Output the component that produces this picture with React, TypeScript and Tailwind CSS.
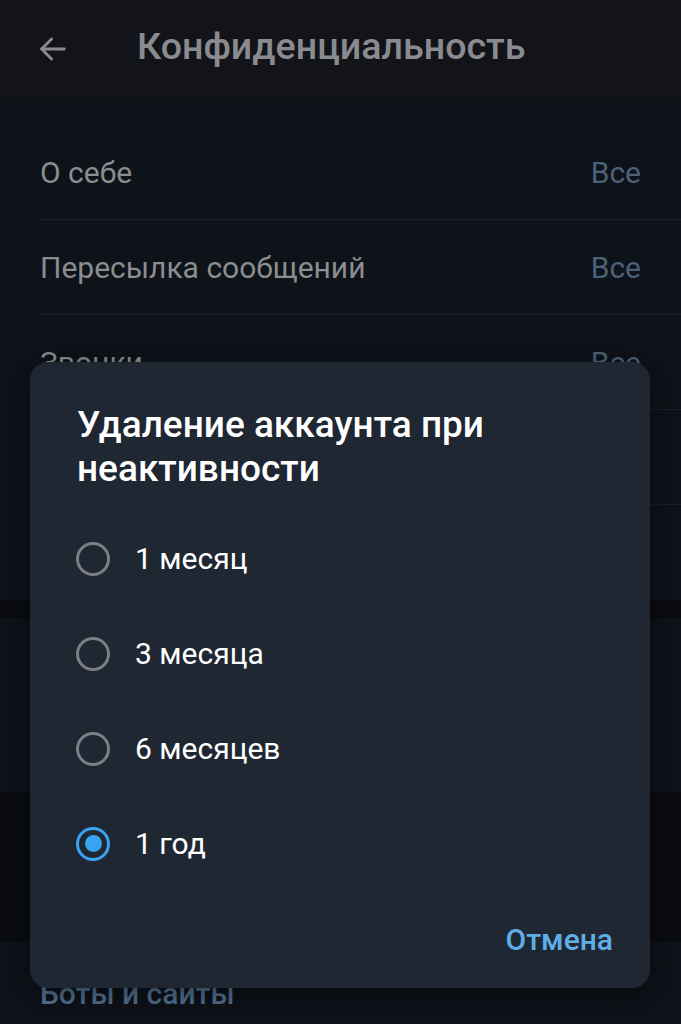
import { useState } from 'react';

const rows = [
    { label: 'О себе', value: 'Все' },
    { label: 'Пересылка сообщений', value: 'Все' },
    { label: 'Звонки', value: 'Все' },
    { label: 'Группы', value: 'Все' },
    { label: 'Голосовые сообщения', value: 'Все' },
];

const options = ['1 месяц', '3 месяца', '6 месяцев', '1 год'];

export default function App() {
    const [selected, setSelected] = useState('1 год');

    return (
        <div className="relative w-[681px] h-[1024px] overflow-hidden bg-[#0e1219]" style={{ fontFamily: "Roboto, 'Noto Sans', sans-serif" }}>
            {/* Header */}
            <div className="h-[97px] bg-[#131419] flex items-center">
                <div className="w-[137px] pl-[36px] flex items-center">
                    <svg width="34" height="34" viewBox="0 0 24 24" fill="none" stroke="#8a8b8f" strokeWidth="2" strokeLinecap="round" strokeLinejoin="round">
                        <path d="M20 12H4" />
                        <path d="M11 5l-7 7 7 7" />
                    </svg>
                </div>
                <h1 className="text-[37.6px] font-medium text-[#8a8b8f] leading-none -mt-1">Конфиденциальность</h1>
            </div>

            {/* Privacy list */}
            <div className="pt-[28px]">
                {rows.map((r, i) => (
                    <div key={i} className="h-[95px] flex items-center justify-between pl-[40px] pr-[40px] relative">
                        <span className="text-[30px] text-[#8b8d91]">{r.label}</span>
                        <span className="text-[30px] text-[#4b6178]">{r.value}</span>
                        {i < rows.length - 1 && <div className="absolute bottom-0 left-[40px] right-0 h-px bg-[#1a1e26]" />}
                    </div>
                ))}
            </div>

            <div className="h-[18px] bg-[#0a0c10]" />

            {/* Delete account section */}
            <div className="pt-[38px]">
                <p className="pl-[40px] text-[27px] font-medium text-[#4a6a88]">Удаление аккаунта</p>
                <div className="h-[95px] flex items-center justify-between px-[40px]">
                    <span className="text-[30px] text-[#8b8d91]">Если я не захожу</span>
                    <span className="text-[30px] text-[#4b6178]">1 год</span>
                </div>
            </div>
            <div className="bg-[#0a0c10] px-[40px] pt-[26px] pb-[34px]">
                <p className="text-[22px] leading-[30px] text-[#55585e]">
                    Если Вы ни разу не загляните в Telegram за это время, аккаунт будет удалён вместе со всеми сообщениями и контактами.
                </p>
            </div>
            <div className="pt-[29px]">
                <p className="pl-[40px] text-[30px] font-medium text-[#56779a]">Боты и сайты</p>
            </div>

            {/* Dialog */}
            <div className="absolute left-[30px] top-[362px] w-[620px] h-[626px] rounded-[18px] bg-[#1f2733] shadow-[0_8px_30px_rgba(0,0,0,0.5)] flex flex-col">
                <h2 className="pl-[47px] pr-[40px] pt-[41px] text-[37px] leading-[44px] font-medium text-white">
                    Удаление аккаунта при неактивности
                </h2>
                <div className="mt-[20px] flex flex-col">
                    {options.map(o => {
                        const on = o === selected;
                        return (
                            <button key={o} onClick={() => setSelected(o)} className="h-[95px] flex items-center pl-[46px] text-left">
                                <span className={on ? 'w-[34px] h-[34px] rounded-full border-[3px] border-[#3aa3f0] flex items-center justify-center' : 'w-[34px] h-[34px] rounded-full border-[3px] border-[#7b7f85]'}>
                                    {on && <span className="w-[17px] h-[17px] rounded-full bg-[#3aa3f0]" />}
                                </span>
                                <span className="ml-[25px] text-[30px] text-white">{o}</span>
                            </button>
                        );
                    })}
                </div>
                <div className="mt-auto pb-[26px] pr-[37px] flex justify-end">
                    <button className="text-[30px] font-medium text-[#5faee8]">Отмена</button>
                </div>
            </div>
        </div>
    );
}
